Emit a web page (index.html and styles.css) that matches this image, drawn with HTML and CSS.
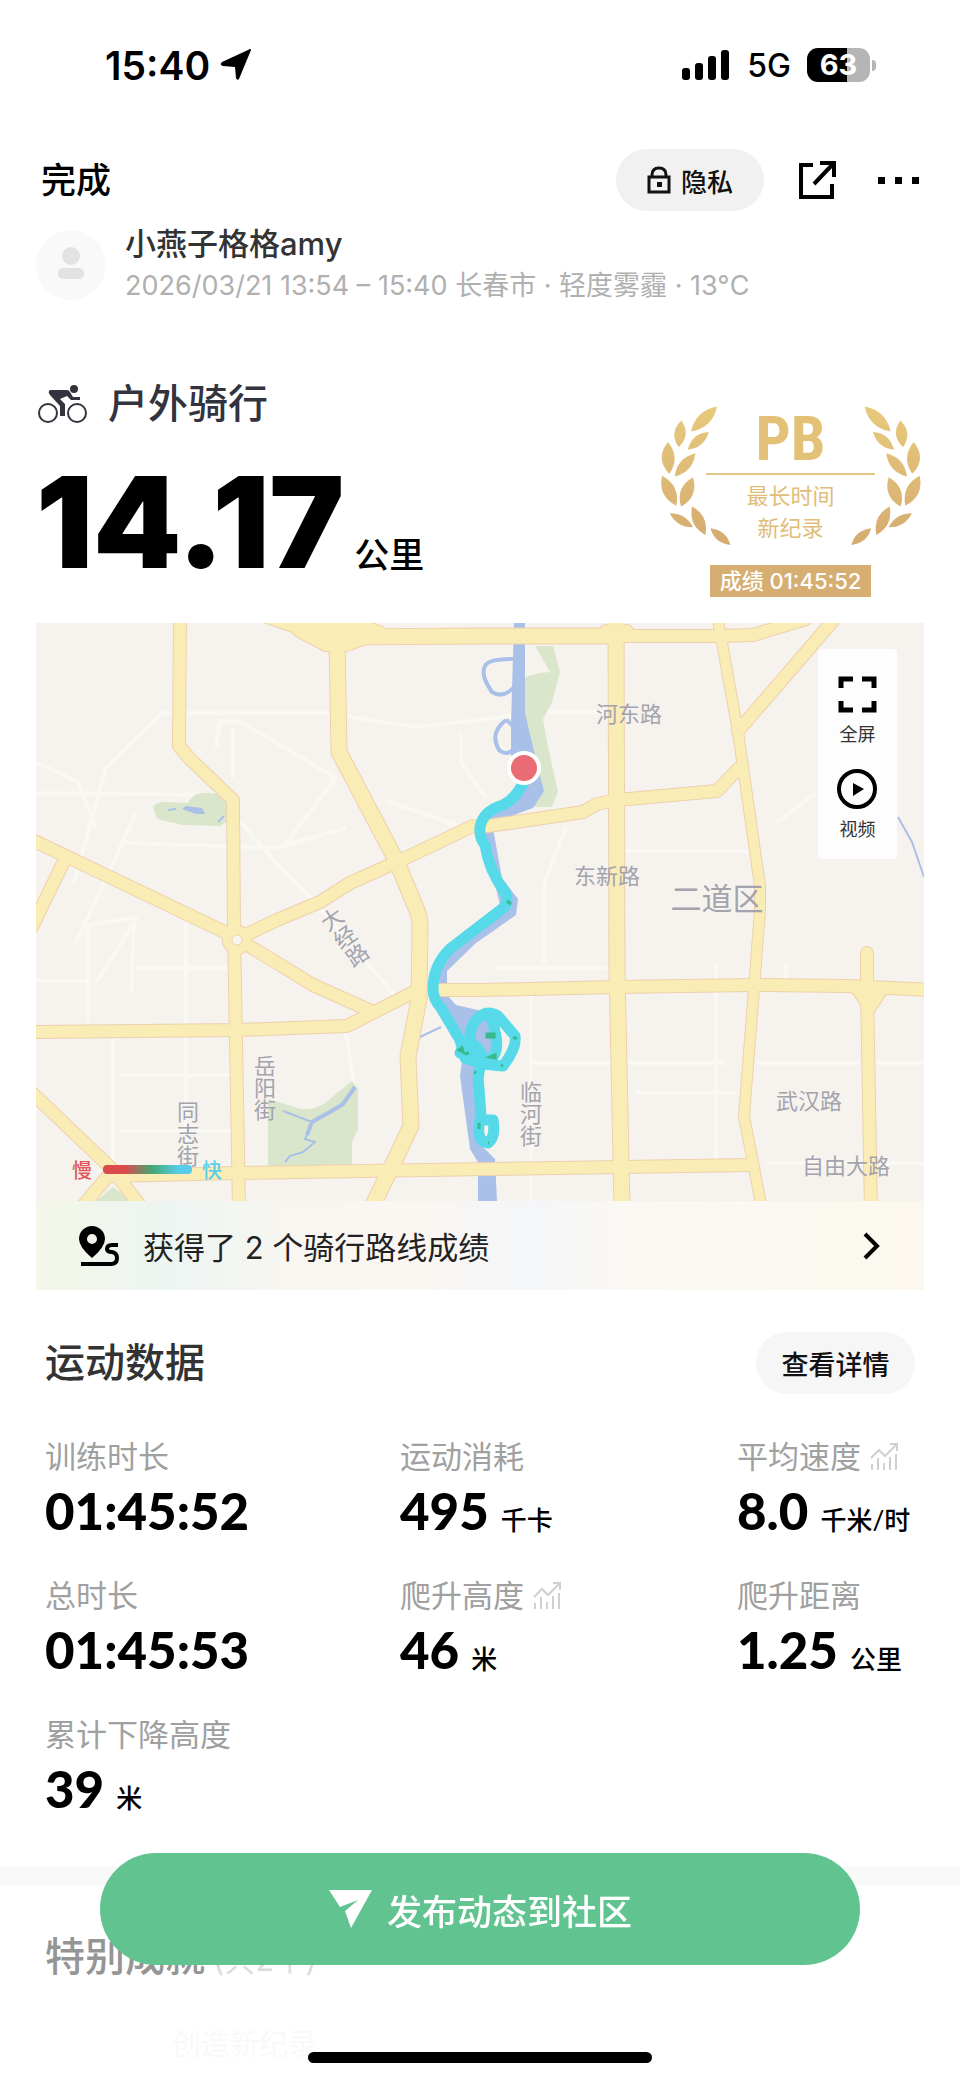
FILE: index.html
```html
<!DOCTYPE html>
<html lang="zh-CN">
<head>
    <meta charset="UTF-8">
    <meta name="viewport" content="width=device-width, initial-scale=1.0">
    <title>户外骑行</title>
    <link rel="stylesheet" href="styles.css">
</head>
<body>
    <div class="status-bar">
        <div class="status-time">
            <span>15:40</span>
            <svg width="32" height="32" viewBox="0 0 32 32"><path d="M31 1 L19 30 Q17 32 16 29 L15 18 L3 17 Q-1 16 2 13 L28 1 Q31 -1 31 1 Z" fill="#000"/></svg>
        </div>
        <div class="status-icons">
            <svg width="50" height="32" viewBox="0 0 50 32">
                <rect x="1" y="19" width="8" height="12" rx="3"/>
                <rect x="14" y="14" width="8" height="17" rx="3"/>
                <rect x="27" y="7" width="8" height="24" rx="3"/>
                <rect x="40" y="1" width="8" height="30" rx="3"/>
            </svg>
            <span class="network">5G</span>
            <span class="battery">63</span>
        </div>
    </div>

    <header class="header">
        <button type="button" class="done">完成</button>
        <div class="header-actions">
            <button type="button" class="pill privacy">
                <svg width="24" height="28" viewBox="0 0 24 28" fill="none" stroke="#111" stroke-width="3">
                    <path d="M2 11 H22 V26 H2 Z M5 11 V9 Q5 2 12 2 Q19 2 19 9 V11"/>
                    <rect x="10" y="16" width="5" height="5" fill="#111" stroke="none"/>
                </svg>
                隐私
            </button>
            <button type="button" class="icon-button" aria-label="分享">
                <svg width="38" height="38" viewBox="0 0 38 38" fill="none" stroke="#000" stroke-width="4">
                    <path d="M14 4 H2 V36 H33 V23"/>
                    <path d="M21 2 H35 V16 M34 3 L15 23"/>
                </svg>
            </button>
            <button type="button" class="icon-button more" aria-label="更多">
                <svg width="42" height="38" viewBox="0 0 42 38"><path d="M1 16 h7 v7 h-7z M18 16 h7 v7 h-7z M35 16 h7 v7 h-7z"/></svg>
            </button>
        </div>
    </header>

    <div class="user">
        <svg class="avatar" width="70" height="70" viewBox="0 0 70 70">
            <circle cx="35" cy="35" r="35" fill="#f9f9f9"/>
            <circle cx="35" cy="26" r="9" fill="#e2e2e2"/>
            <rect x="22" y="38" width="26" height="11" rx="5" fill="#e2e2e2"/>
        </svg>
        <div>
            <div class="user-name">小燕子格格amy</div>
            <div class="user-meta">2026/03/21 13:54 – 15:40 长春市 · 轻度雾霾 · 13°C</div>
        </div>
    </div>

    <div class="summary">
        <div>
            <h1 class="sport">
                <svg width="50" height="40" viewBox="0 0 50 40" fill="none" stroke="#33333f">
                    <circle cx="10" cy="29" r="9" stroke-width="2"/>
                    <circle cx="39" cy="29" r="9" stroke-width="2"/>
                    <circle cx="36" cy="5" r="4" fill="#33333f" stroke="none"/>
                    <path d="M11 7 Q11 6 13 6 H29 Q31 6 32 8 L35 13 H42 V16 H33 L29 12 L22 15 L27 20 V32 H22 V22 L12 11 Q10 9 11 7 Z" fill="#33333f" stroke="none"/>
                </svg>
                户外骑行
            </h1>
            <div class="distance">14.17<span class="distance-unit">公里</span></div>
        </div>
        <div class="badge">
            <div class="medal">
                <svg class="wreath" width="267" height="147" viewBox="170 100 800 440">
                    <defs>
                        <linearGradient id="gold" gradientUnits="userSpaceOnUse" x1="0" y1="100" x2="0" y2="540">
                            <stop offset="0" stop-color="#e8ca7c"/>
                            <stop offset="1" stop-color="#d4aa70"/>
                        </linearGradient>
                        <g id="leaves" fill="url(#gold)">
                            <path d="M350 110 Q336 174 272 185 Q286 122 350 110Z"/>
                            <path d="M243 152 Q273 195 235 232 Q205 189 243 152Z"/>
                            <path d="M325 187 Q311 235 262 240 Q275 191 325 187Z"/>
                            <path d="M203 217 Q241 264 207 312 Q163 266 203 217Z"/>
                            <path d="M285 250 Q278 306 223 320 Q230 264 285 250Z"/>
                            <path d="M185 318 Q240 347 228 408 Q172 379 185 318Z"/>
                            <path d="M278 322 Q295 380 242 410 Q225 352 278 322Z"/>
                            <path d="M208 430 Q256 429 278 472 Q230 473 208 430Z"/>
                            <path d="M275 410 Q326 437 315 495 Q264 467 275 410Z"/>
                            <path d="M330 475 Q377 480 390 525 Q343 520 330 475Z"/>
                        </g>
                    </defs>
                    <use href="#leaves"/>
                    <use href="#leaves" transform="translate(1142 0) scale(-1 1)"/>
                </svg>
                <div class="medal-text">
                    <strong>PB</strong>
                    <span>最长时间</span>
                    <span>新纪录</span>
                </div>
            </div>
            <div class="badge-score">成绩 01:45:52</div>
        </div>
    </div>

    <div class="map-card">
        <div class="map">
            <svg class="map-canvas" viewBox="0 0 888 578">
                <defs>
                    <linearGradient id="speed">
                        <stop offset="0.250" stop-color="#dc4a4c"/>
                        <stop offset="0.550" stop-color="#43a871"/>
                        <stop offset="0.850" stop-color="#58cdea"/>
                    </linearGradient>
                    <g id="roads">
                        <path class="w12" d="M144 -8 L143 123 L154 136 L197 177 L198 306 L203 586"/>
                        <path class="w15" d="M230 -8 L294 14 L454 13 L577 13"/>
                        <path class="w12" d="M577 13 L684 13 L717 12 L770 -4"/>
                        <path class="w12" d="M249 0 L275 0 L294 6 L330 4 L345 10 L310 22 L290 22 L262 7"/>
                        <path class="w15" d="M301 16 L303 129 L361 239 L382 290 Q384 296 384 303 L383 376 L372 433 L375 503 L356 543 L335 586"/>
                        <path class="w12" d="M-8 215 L197 313 L277 362 L335 388"/>
                        <path class="w12" d="M29 236 L-4 304"/>
                        <path class="w12" d="M201 316 L241 297 L284 279 L314 260 L361 239 L437 203 M444 204 L487 198 L547 189 L561 181 L581 177 L681 168 L702 146"/>
                        <path class="w15" d="M580 -8 L581 346 L586 586"/>
                        <path class="w12" d="M570 8 L580 20 L591 8"/>
                        <path class="w11" d="M681 -8 L702 109 L724 263 L724 286 L718 366 L708 493 L726 586"/>
                        <path class="w12" d="M802 -8 L702 108"/>
                        <path class="w12" d="M-8 409 L201 407 L311 403 L382 367 M402 367 L444 367 L581 364 L717 362 L811 363 L896 367"/>
                        <path class="w12" d="M831 330 L831 366 L835 590 M821 366 L834 384 L846 366"/>
                        <path class="w12" d="M77 553 L201 550 L454 546 L714 542"/>
                        <path class="w12" d="M-8 466 L77 547 L105 584 M77 547 L46 584"/>
                        <circle class="w12" cx="201" cy="317" r="8"/>
                    </g>
                </defs>
                <rect width="888" height="578" fill="#f6f3ee"/>
                <g class="lanes">
                    <path d="M0 139 L42 159 L60 205 M38 260 L70 145 L126 90 L290 90 L380 104 L450 96 L500 89 H580"/>
                    <path d="M180 125 L184 98 L205 99 L300 155 L250 220 M197 190 L240 240 L280 280 L360 374 M197 155 V105"/>
                    <path d="M0 170 L190 172 M95 370 L98 300 L60 360 M40 320 L100 190 M103 294 L52 302 V400 M90 220 L240 225 L310 205"/>
                    <path d="M425 110 V140 L450 175 M350 178 L430 205 M530 205 L508 260 V340 M460 345 H570 M495 366 V578 M495 440 H690 M720 440 H888"/>
                    <path d="M77 410 V545 M150 300 V545 M84 452 H200 M84 508 H196 M310 410 L318 460 M680 340 V540 M600 470 H700 M730 540 H888"/>
                    <path d="M0 358 H50 M100 345 H195 M590 228 H720 M740 200 L780 170 M750 340 V362"/>
                </g>
                <g class="parks">
                    <path d="M489 54 L504 50 L514 49 L499 23 H517 L524 49 L516 79 L507 96 L511 119 L522 169 L516 184 H494 L506 166 L489 93Z"/>
                    <path d="M117 184 Q120 179 130 179 L152 180 Q158 168 172 170 L191 171 L192 198 L184 203 L147 202 L121 196Z"/>
                    <path d="M232 476 L265 486 Q281 488 294 476 L316 458 L322 466 V506 L316 519 V543 L232 544Z"/>
                    <path d="M60 578 L77 564 L96 578Z"/>
                </g>
                <g class="water">
                    <path d="M478 0 H489 V90 L498 128 L508 168 L497 185 L456 200 L466 255 L482 276 L480 292 L440 320 L411 348 V372 L420 382 L446 388 L464 403 L464 430 L447 446 L438 450 L443 520 L459 536 L461 578 H442 V539 L434 526 L424 453 L427 430 L398 365 L402 342 L465 285 L444 204 L455 190 L482 170 L486 145 L475 132 V100Z"/>
                    <path d="M146 186 L150 183 L166 185 L169 191 L160 191 Z"/>
                </g>
                <g class="streams">
                    <path d="M477 36 Q452 36 449 43 Q444 52 456 69 Q467 76 478 64"/>
                    <path d="M470 97 Q453 110 463 127 Q472 135 481 122 Q482 104 470 97"/>
                    <path d="M319 464 L307 481 L294 489 L276 499 L271 512"/>
                    <path class="thin" d="M276 499 L247 488 M276 499 L269 516 L279 519 L267 529 L254 533 L249 539"/>
                    <path class="thin" d="M384 414 L405 404 M862 194 L876 219 L888 254 M132 187 L140 186 M182 199 L188 193"/>
                </g>
                <use href="#roads" class="road-edge"/>
                <use href="#roads" class="road-fill"/>
                <circle cx="201" cy="317" r="5" fill="#f8f5ee" stroke="#f0d4ae"/>
                <g class="track">
                    <path d="M489 156 Q481 175 467 182 Q447 188 444 204 Q443 215 449 222 Q453 248 469 269 Q474 280 466 286 L415 325 Q397 342 397 366 Q397 376 405 385 L424 417 L429 435 L447 441 L467 443 Q481 425 479 413 L462 393 Q450 386 440 397 Q430 410 437 428 Q447 442 457 434 Q464 425 458 405 L454 392"/>
                    <path d="M424 430 Q434 408 448 436 Q440 450 443 465 L445 493 Q438 518 452 520 Q460 514 457 497 H448"/>
                </g>
                <g class="slow">
                    <path d="M451 411 h7 v3 h-7z M423 427 l3 -2 l1 4z M477 415 h4 M454 434 l5 -2 v3z M438 449 l2 1 M443 500 v6 M471 278 l4 3 M465 443 l2 -1 M429 431 l4 -1 M452 520 h1"/>
                </g>
                <circle cx="488" cy="145" r="17" fill="#fff"/>
                <circle cx="488" cy="145" r="13" fill="#e96c74"/>
                <g class="labels">
                    <text x="593" y="99">河东路</text>
                    <text x="571" y="261">东新路</text>
                    <text class="district" x="681" y="287">二道区</text>
                    <text x="773" y="486">武汉路</text>
                    <text x="810" y="551">自由大路</text>
                    <text class="vertical" x="227" y="465">岳阳街</text>
                    <text class="vertical" x="150" y="511">同志街</text>
                    <text class="vertical" x="493" y="491">临河街</text>
                    <text class="vertical" transform="translate(307 315) rotate(-35)">大经路</text>
                </g>
                <g class="legend">
                    <text class="legend-slow" x="46" y="555">慢</text>
                    <rect x="67" y="542" width="89" height="9" rx="4" fill="url(#speed)"/>
                    <text class="legend-fast" x="176" y="555">快</text>
                </g>
            </svg>
            <div class="map-tools">
                <button type="button" class="map-tool">
                    <svg width="41" height="41" viewBox="0 0 41 41" fill="none" stroke="#000" stroke-width="5"><path d="M4 14 V5 H16 M25 5 H37 V14 M37 27 V36 H25 M16 36 H4 V27"/></svg>
                    全屏
                </button>
                <button type="button" class="map-tool">
                    <svg width="41" height="41" viewBox="0 0 41 41"><circle cx="20" cy="20" r="18" fill="none" stroke="#000" stroke-width="4"/><path d="M16 14 L27 20 L16 27Z"/></svg>
                    视频
                </button>
            </div>
        </div>
        <a href="#" class="route-link">
            <svg width="42" height="42" viewBox="0 0 42 42">
                <path fill-rule="evenodd" d="M14 1 A13 13 0 0 1 27 14 Q27 22 14 33 Q1 22 1 14 A13 13 0 0 1 14 1Z M14 9 A5 5 0 1 0 14 19 A5 5 0 1 0 14 9Z"/>
                <path d="M40 20 H34 Q29 20 29 24 Q29 27 34 27 Q39 28 39 33 Q39 39 33 39 H3" fill="none" stroke="#000" stroke-width="4"/>
            </svg>
            <span>获得了 2 个骑行路线成绩</span>
            <svg width="18" height="28" viewBox="0 0 18 28" fill="none" stroke="#000" stroke-width="4"><path d="M3 2 L15 14 L3 26"/></svg>
        </a>
    </div>

    <section class="data">
        <div class="data-head">
            <h2>运动数据</h2>
            <button type="button" class="pill details">查看详情</button>
        </div>
        <dl class="stats">
            <div>
                <dt>训练时长</dt>
                <dd>01:45:52</dd>
            </div>
            <div>
                <dt>运动消耗</dt>
                <dd>495 <span>千卡</span></dd>
            </div>
            <div>
                <dt>平均速度
                    <svg width="30" height="30" viewBox="0 0 30 30"><path d="M2 16 L10 8 L16 14 L28 2 M21 2 H28 V9 M3 28 V22 M9 28 V16 M15 28 V21 M21 28 V15 M27 28 V12"/></svg>
                </dt>
                <dd>8.0 <span>千米/时</span></dd>
            </div>
            <div>
                <dt>总时长</dt>
                <dd>01:45:53</dd>
            </div>
            <div>
                <dt>爬升高度
                    <svg width="30" height="30" viewBox="0 0 30 30"><path d="M2 16 L10 8 L16 14 L28 2 M21 2 H28 V9 M3 28 V22 M9 28 V16 M15 28 V21 M21 28 V15 M27 28 V12"/></svg>
                </dt>
                <dd>46 <span>米</span></dd>
            </div>
            <div>
                <dt>爬升距离</dt>
                <dd>1.25 <span>公里</span></dd>
            </div>
            <div>
                <dt>累计下降高度</dt>
                <dd>39 <span>米</span></dd>
            </div>
        </dl>
    </section>

    <section class="achievements">
        <h2>特别成就<span>(共2个)</span></h2>
        <p>创造新纪录</p>
    </section>

    <div class="dock">
        <button type="button" class="publish">
            <svg width="44" height="38" viewBox="0 0 44 38"><path d="M1 0 H44 L23 38 L17 21 L30 10 L12 17Z" fill="#fff"/></svg>
            发布动态到社区
        </button>
        <div class="home-bar"></div>
    </div>
</body>
</html>
```

FILE: styles.css
```css
* {
    box-sizing: border-box;
}
body {
    margin: 0;
    background: #fff;
    color: #000;
    font-family: Inter, "Noto Sans CJK SC", sans-serif;
}
h1, h2, dl, dd, p {
    margin: 0;
}
button {
    padding: 0;
    border: none;
    background: none;
    color: inherit;
    font-family: inherit;
    cursor: pointer;
}
svg {
    display: block;
    flex-shrink: 0;
}

/* Status bar */
.status-bar {
    display: flex;
    justify-content: space-between;
    align-items: center;
    height: 130px;
    padding: 0 84px 0 105px;
}
.status-time {
    display: flex;
    align-items: center;
    gap: 10px;
    font-size: 39px;
    font-weight: 600;
}
.status-icons {
    display: flex;
    align-items: center;
    gap: 16px;
}
.network {
    font-size: 32px;
    font-weight: 500;
}
.battery {
    position: relative;
    width: 63px;
    height: 34px;
    margin-right: 6px;
    border-radius: 11px;
    background: linear-gradient(to right, #000 63%, #b5b5b5 63%);
    color: #fff;
    font-size: 29px;
    font-weight: 700;
    line-height: 34px;
    text-align: center;
}
.battery::after {
    content: "";
    position: absolute;
    top: 12px;
    right: -6px;
    width: 4px;
    height: 11px;
    border-radius: 0 4px 4px 0;
    background: #b5b5b5;
}

/* Header */
.header {
    display: flex;
    justify-content: space-between;
    align-items: center;
    padding: 19px 41px 0;
}
.done {
    font-size: 35px;
    font-weight: 500;
    line-height: 48px;
}
.header-actions {
    display: flex;
    align-items: center;
    gap: 35px;
}
.more {
    padding-left: 5px;
}
.pill {
    display: flex;
    justify-content: center;
    align-items: center;
    height: 62px;
    border-radius: 31px;
    color: #111;
    font-size: 27px;
    font-weight: 500;
}
.privacy {
    gap: 10px;
    width: 148px;
    background: #f1f1f1;
    font-size: 26px;
}
.user {
    display: flex;
    align-items: center;
    gap: 19px;
    margin-top: 16px;
    padding: 0 36px;
}
.user-name {
    color: #333;
    font-size: 31px;
    font-weight: 500;
    line-height: 34px;
}
.user-meta {
    margin-top: 8px;
    color: #b0b0b0;
    font-size: 27px;
    line-height: 34px;
}

/* Distance and record badge */
.summary {
    display: flex;
    justify-content: space-between;
    margin-top: 77px;
    padding: 0 36px;
}
.sport {
    display: flex;
    align-items: center;
    gap: 20px;
    padding-left: 2px;
    color: #33333f;
    font-size: 40px;
    font-weight: 500;
    line-height: 48px;
}
.distance {
    margin-top: 34px;
    font-size: 126px;
    font-weight: 900;
    line-height: 120px;
}
.distance-unit {
    margin-left: 10px;
    font-size: 35px;
    font-weight: 500;
    line-height: 1;
}
.badge {
    display: flex;
    flex-direction: column;
    align-items: center;
    margin-top: 23px;
}
.medal {
    display: grid;
    justify-items: center;
}
.wreath, .medal-text {
    grid-area: 1 / 1;
}
.medal-text {
    display: flex;
    flex-direction: column;
    align-items: center;
    padding-top: 2px;
    color: #dfbd78;
    font-size: 22px;
    line-height: 32px;
}
.medal-text strong {
    width: 169px;
    margin-bottom: 5px;
    border-bottom: 2px solid #e5c583;
    color: #e3c177;
    font-family: "Roboto Condensed", "Liberation Sans Narrow", Roboto, sans-serif;
    font-size: 62px;
    line-height: 68px;
    text-align: center;
}
.badge-score {
    height: 32px;
    margin-top: 15px;
    padding: 0 10px;
    background: #d6ae72;
    color: #fff;
    font-size: 22px;
    font-weight: 500;
    line-height: 32px;
}

/* Map */
.map-card {
    margin: 26px 36px 0;
}
.map {
    position: relative;
}
.map-canvas {
    width: 100%;
    height: auto;
}
.lanes {
    fill: none;
    stroke: #faf8f3;
    stroke-width: 4;
}
.parks {
    fill: #dae6cb;
}
.water {
    fill: #a9c1e8;
}
.streams {
    fill: none;
    stroke: #a9c1e8;
    stroke-width: 4;
}
.streams .thin {
    stroke-width: 2;
}
.road-edge, .road-fill {
    fill: none;
    stroke-linecap: round;
    stroke-linejoin: round;
}
.road-edge {
    --edge: 2px;
    stroke: #eed0ae;
}
.road-fill {
    --edge: 0px;
    stroke: #faecb5;
}
.w11 {
    stroke-width: calc(10px + var(--edge));
}
.w12 {
    stroke-width: calc(12px + var(--edge));
}
.w15 {
    stroke-width: calc(15px + var(--edge));
}
.track {
    fill: none;
    stroke: #56d9e8;
    stroke-width: 11;
    stroke-linecap: round;
    stroke-linejoin: round;
}
.slow {
    fill: #38b98c;
    stroke: #38b98c;
    stroke-width: 3;
}
.labels, .legend {
    fill: #a3a3ad;
    font-size: 22px;
    text-anchor: middle;
}
.labels .district {
    font-size: 31px;
}
.labels .vertical {
    writing-mode: vertical-rl;
}
.legend {
    font-size: 20px;
    font-weight: 500;
}
.legend .legend-slow {
    fill: #e0595d;
}
.legend .legend-fast {
    fill: #5bcfe6;
}
.map-tools {
    position: absolute;
    top: 26px;
    right: 27px;
    display: flex;
    flex-direction: column;
    gap: 22px;
    width: 79px;
    padding: 25px 0 17px;
    border-radius: 4px;
    background: #fdfdfd;
}
.map-tool {
    display: flex;
    flex-direction: column;
    align-items: center;
    gap: 8px;
    color: #333;
    font-size: 18px;
    line-height: 24px;
}
.route-link {
    display: flex;
    align-items: center;
    gap: 23px;
    height: 89px;
    padding: 0 44px 0 42px;
    background: linear-gradient(to right, #f3f7e9, #edf5f2 15%, #f8f6f1 28%, #fbf6f1 42%, #f4f6f9 56%, #fbf8f3 66%, #fcf8ef);
    color: #222;
    font-size: 31px;
    text-decoration: none;
}
.route-link span {
    flex: 1;
}

/* Workout data */
.data {
    padding: 42px 45px 47px;
}
.data-head {
    display: flex;
    justify-content: space-between;
    align-items: center;
}
h2 {
    color: #333;
    font-size: 40px;
    font-weight: 500;
    line-height: 48px;
}
.details {
    width: 159px;
    background: #f6f6f6;
}
.stats {
    display: grid;
    grid-template-columns: 355fr 337fr 178fr;
    row-gap: 35px;
    margin-top: 43px;
}
.stats dt {
    display: flex;
    align-items: center;
    gap: 8px;
    color: #a0a0a0;
    font-size: 31px;
    line-height: 40px;
    white-space: nowrap;
}
.stats dt svg {
    fill: none;
    stroke: #d0d0d0;
    stroke-width: 2;
}
.stats dd {
    height: 60px;
    margin-top: 4px;
    font-family: Lato, "Noto Sans CJK SC", sans-serif;
    font-size: 51px;
    font-weight: 900;
    line-height: 60px;
    white-space: nowrap;
}
.stats dd span {
    font-size: 26px;
    font-weight: 500;
    line-height: 1;
}

/* Achievements */
.achievements {
    padding: 47px 45px 12px;
    border-top: 20px solid #f9f9f9;
}
.achievements h2 {
    height: 48px;
    color: #959595;
}
.achievements h2 span {
    margin-left: 8px;
    color: #dcdcdc;
    font-size: 31px;
    font-weight: 400;
    line-height: 1;
}
.achievements p {
    margin-top: 44px;
    padding-left: 127px;
    color: #f9f9f9;
    font-size: 29px;
    line-height: 40px;
}

/* Bottom button */
.dock {
    position: fixed;
    right: 0;
    bottom: 0;
    left: 0;
    display: flex;
    flex-direction: column;
    align-items: center;
    padding: 0 100px 18px;
}
.publish {
    display: flex;
    justify-content: center;
    align-items: center;
    gap: 15px;
    width: 100%;
    height: 112px;
    border-radius: 56px;
    background: #61c490;
    color: #fff;
    font-size: 35px;
    font-weight: 500;
}
.home-bar {
    width: 344px;
    height: 11px;
    margin-top: 87px;
    border-radius: 6px;
    background: #000;
}
```
